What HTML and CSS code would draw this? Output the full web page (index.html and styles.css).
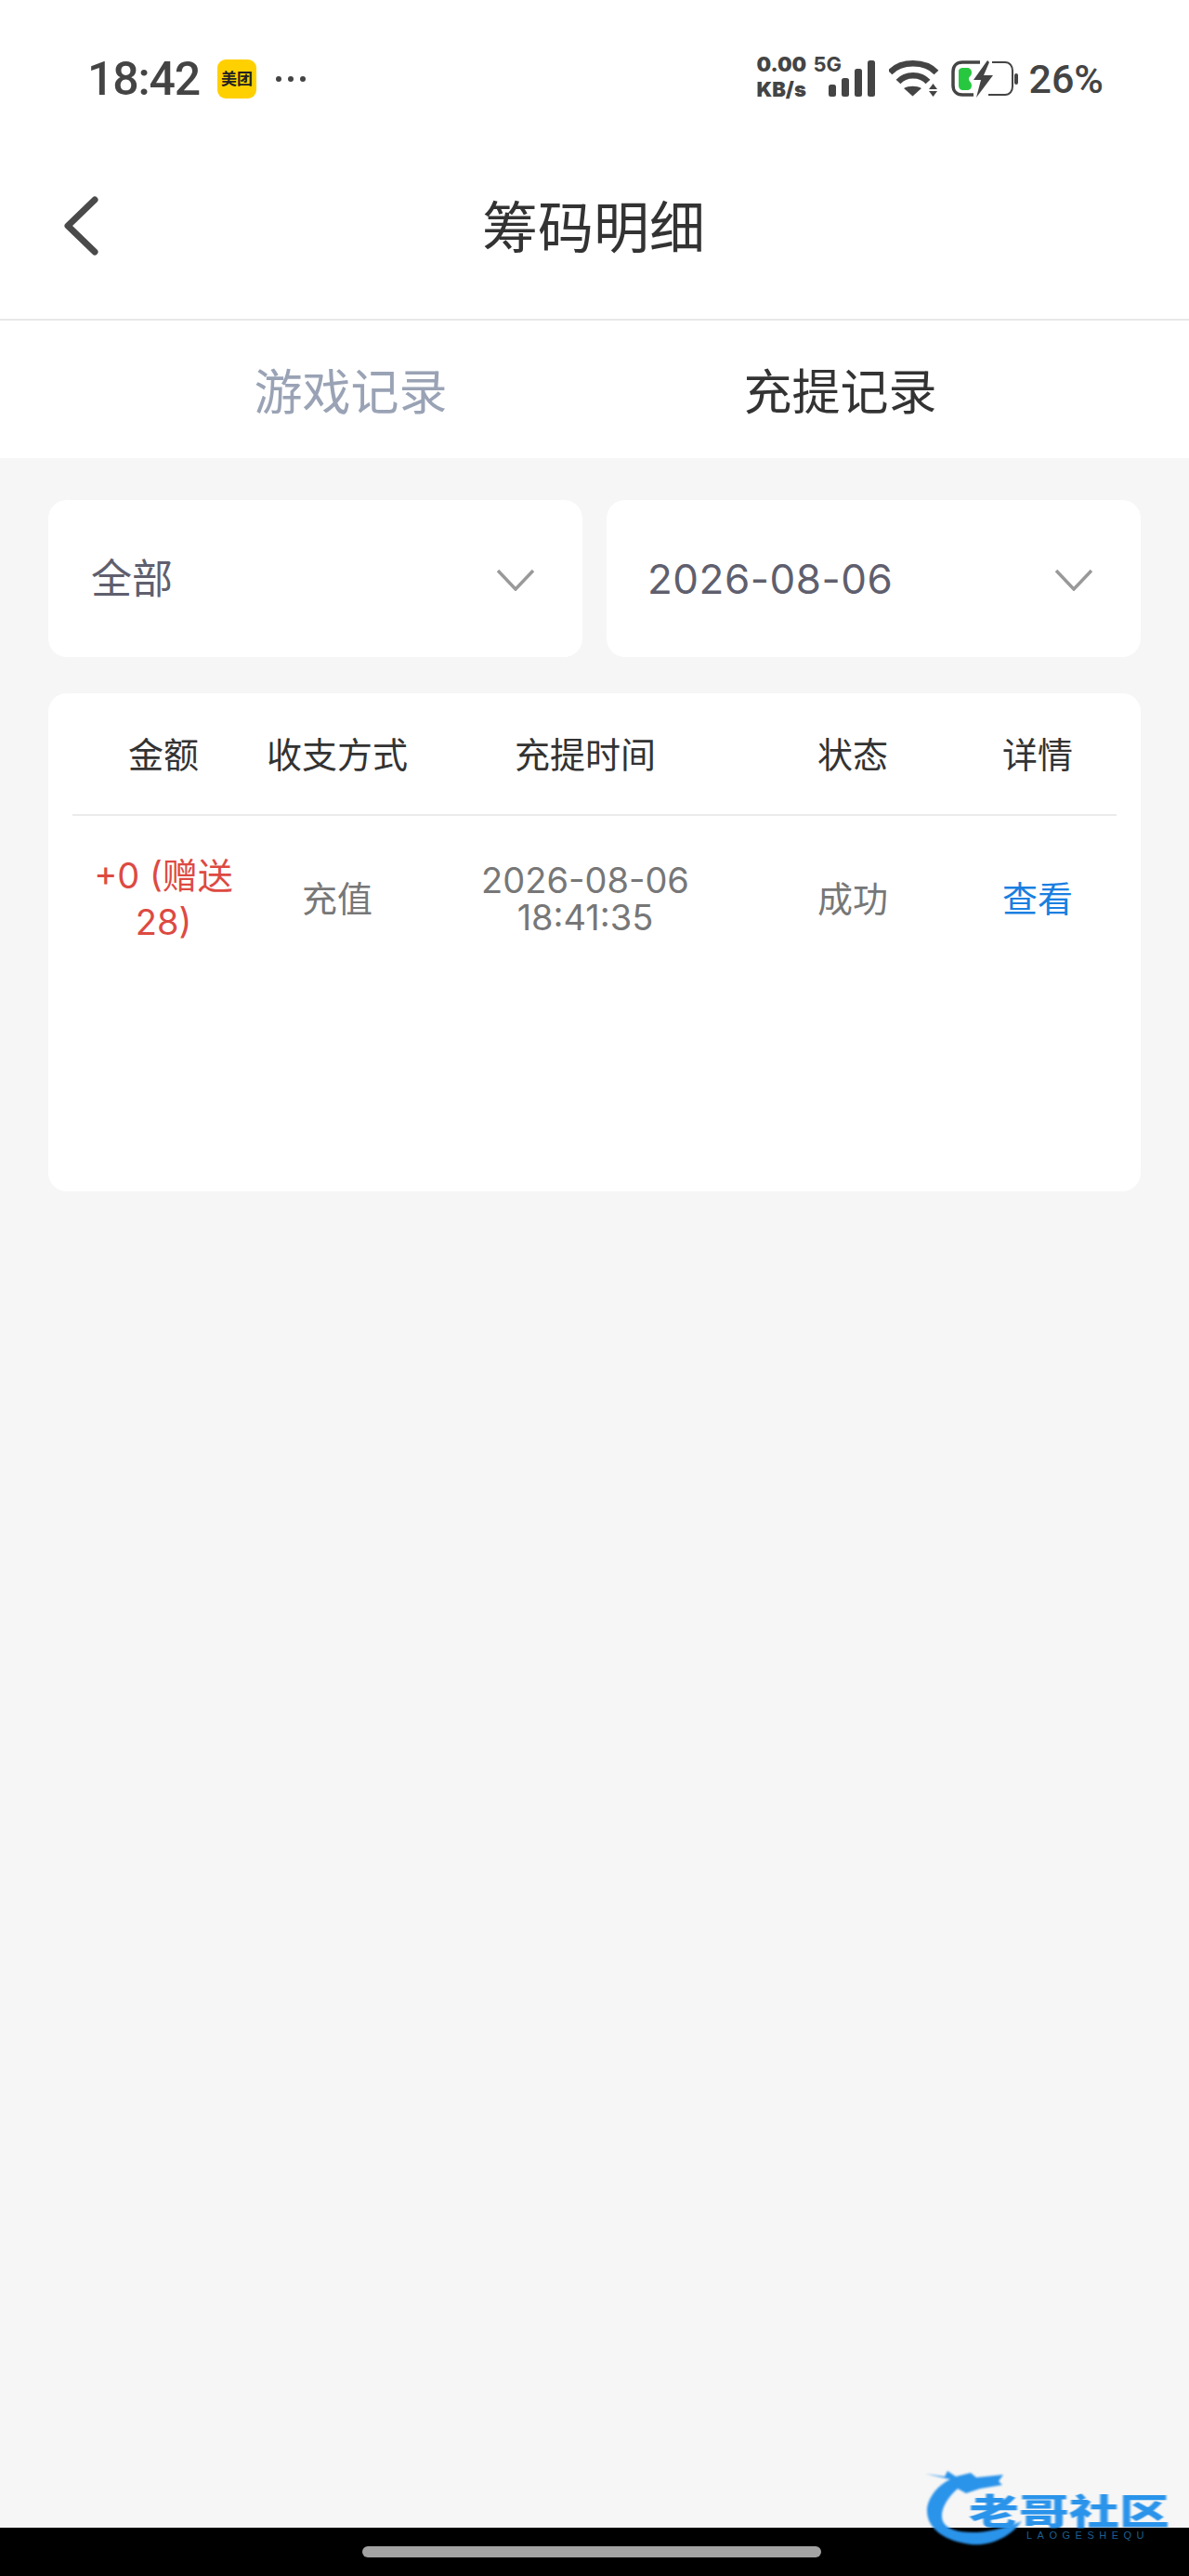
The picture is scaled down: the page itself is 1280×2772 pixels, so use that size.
FILE: index.html
```html
<!DOCTYPE html>
<html lang="zh-CN">
  <head>
    <meta charset="UTF-8" />
    <meta name="viewport" content="width=device-width, initial-scale=1.0" />
    <title>筹码明细</title>
    <link rel="stylesheet" href="styles.css">
  </head>
  <body>
    <div class="page">
      <!-- phone status bar -->
      <div class="status-bar">
        <div class="status-left">
          <span class="clock">18:42</span>
          <span class="app-badge">
            <svg width="42" height="42" viewBox="0 0 42 42">
              <rect x="0" y="0" width="42" height="42" rx="9" fill="#ffd000" />
              <text x="4" y="27" class="badge-text">美团</text>
            </svg>
          </span>
          <span class="dots"><i></i><i></i><i></i></span>
        </div>
        <div class="status-right">
          <div class="net">
            <span class="net-speed"><b>0.00</b><b>KB/s</b></span>
            <span class="net-type">5G</span>
          </div>
          <svg class="signal" width="50" height="42" viewBox="0 0 50 42">
            <rect x="0" y="27" width="8" height="13" rx="2.500" />
            <rect x="14" y="20" width="8" height="20" rx="2.500" />
            <rect x="28" y="10" width="8" height="30" rx="2.500" />
            <rect x="42" y="1" width="8" height="39" rx="2.500" />
          </svg>
          <svg class="wifi" width="54" height="40" viewBox="0 0 54 40">
            <path d="M1 13C13 0 39 0 51 13" fill="none" stroke="#444" stroke-width="6.500" />
            <path d="M10 23C18 14 34 14 42 23" fill="none" stroke="#444" stroke-width="6.500" />
            <path d="M16 30C21 27 30 27 35 30L25.500 38.500Z" fill="#444" />
            <path d="M43 31l4.500-6 4.500 6ZM43 33h9l-4.500 6Z" fill="#444" />
          </svg>
          <svg class="battery" width="74" height="42" viewBox="0 0 74 42">
            <path d="M31 3H12C6 3 2 7 2 13V28C2 34 6 38 12 38H24" fill="none" stroke="#444" stroke-width="3.500" />
            <path d="M40 38H58C63 38 66 34 66 29V12C66 7 63 3 58 3H44" fill="none" stroke="#444" stroke-width="2" />
            <rect x="68" y="15" width="4" height="12" rx="2" fill="#444" />
            <path d="M8 13C8 10 10 9 13 9H17C20 9 22 11 22 14C22 18 19 18 19 21C19 24 22 24 22 28C22 31 20 33 17 33H13C10 33 8 31 8 28Z" fill="#27c840" />
            <path d="M39 1L24 22H32L27 41L45 17H35L41 3Z" fill="#444" />
          </svg>
          <span class="battery-pct">26%</span>
        </div>
      </div>

      <header class="title-bar">
        <svg class="back" width="40" height="66" viewBox="0 0 40 66">
          <path d="M36 5L7 33L36 61" fill="none" stroke="#4a4a4a" stroke-width="7" stroke-linecap="round" stroke-linejoin="round" />
        </svg>
        <h1>筹码明细</h1>
      </header>

      <nav class="tabs">
        <a class="tab">游戏记录</a>
        <a class="tab active">充提记录</a>
      </nav>

      <main class="content">
        <div class="filters">
          <div class="select">
            <span class="cjk">全部</span>
            <svg width="40" height="24" viewBox="0 0 40 24"><path d="M1 2L20 22L39 2" fill="none" stroke="#999" stroke-width="3.500" /></svg>
          </div>
          <div class="select">
            <span class="date">2026-08-06</span>
            <svg width="40" height="24" viewBox="0 0 40 24"><path d="M1 2L20 22L39 2" fill="none" stroke="#999" stroke-width="3.500" /></svg>
          </div>
        </div>

        <section class="records">
          <div class="row head">
            <div>金额</div>
            <div>收支方式</div>
            <div>充提时间</div>
            <div>状态</div>
            <div>详情</div>
          </div>
          <div class="row body">
            <div class="amount">+0 (赠送28)</div>
            <div class="cjk">充值</div>
            <div class="time">2026-08-06 18:41:35</div>
            <div class="cjk">成功</div>
            <div class="cjk"><a class="link">查看</a></div>
          </div>
        </section>
      </main>

      <div class="nav-bar"><span class="home-pill"></span></div>

      <!-- watermark sits over the bottom edge -->
      <div class="watermark">
        <svg width="110" height="86" viewBox="0 0 110 86">
          <path d="M1 4L22 7L25 1L34 7L50 3L56 8L85 5L80 12L84 16L60 20L45 25L36 20C24 30 16 45 20 55C25 68 60 74 105 55C90 76 65 82 50 80C20 76 3 62 3 44C3 30 15 16 28 10Z" fill="#2a93ea" />
        </svg>
        <span class="wm-name">老哥社区</span>
        <span class="wm-sub">LAOGESHEQU</span>
      </div>
    </div>
  </body>
</html>
```

FILE: styles.css
```css
body {
  margin: 0;
  padding: 0;
  font-family: Inter, "Noto Sans CJK SC", sans-serif;
}

.page {
  position: relative;
  width: 1280px;
  height: 2772px;
  display: flex;
  flex-direction: column;
  background-color: #f6f6f6;
  overflow: hidden;
}

/* status bar */
.status-bar {
  height: 170px;
  box-sizing: border-box;
  padding: 0 92px 0 94px;
  display: flex;
  justify-content: space-between;
  align-items: center;
  background-color: #fff;
  color: #444;
}

.status-left,
.status-right {
  display: flex;
  align-items: center;
}

.clock {
  font-family: Roboto, sans-serif;
  font-size: 50px;
  font-weight: 500;
  letter-spacing: -1.200px;
  width: 140px;
}

.app-badge {
  display: flex;
}

.badge-text {
  font-size: 17px;
  font-weight: 700;
  fill: #222;
}

.dots {
  margin-left: 21px;
  display: flex;
  gap: 7px;
}

.dots i {
  width: 6px;
  height: 6px;
  border-radius: 50%;
  background-color: #444;
}

.net {
  display: flex;
  align-items: flex-start;
  font-size: 22px;
  line-height: 27px;
  font-weight: 700;
  margin-bottom: 5px;
}

.net-speed {
  width: 61px;
  display: flex;
  flex-direction: column;
  align-items: flex-start;
}

.net-type {
  width: 31px;
}

.signal {
  fill: #444;
  margin-left: -14px;
}

.wifi {
  margin-left: 15px;
}

.battery {
  margin-left: 13px;
}

.battery-pct {
  font-family: Roboto, sans-serif;
  font-size: 43px;
  font-weight: 500;
  margin-left: 9px;
}

/* title */
.title-bar {
  height: 175px;
  box-sizing: border-box;
  display: flex;
  align-items: center;
  justify-content: center;
  position: relative;
  background-color: #fff;
  border-bottom: 2px solid #e8e8e8;
  padding: 0 2px 33px 0;
}

.title-bar h1 {
  margin: 0;
  font-size: 60px;
  font-weight: 400;
  color: #333;
}

.back {
  position: absolute;
  left: 66px;
  top: 40px;
}

.tabs {
  height: 148px;
  box-sizing: border-box;
  display: grid;
  grid-template-columns: 1fr 1fr;
  padding: 0 112px 2px 114px;
  align-items: center;
  justify-items: center;
  background-color: #fff;
  font-size: 52px;
  color: #9aa3b5;
}

.tab.active {
  color: #333;
}

/* filters and table */
.content {
  flex: 1;
  padding: 45px 52px 0;
}

.filters {
  display: flex;
  gap: 26px;
}

.select {
  flex: 1;
  height: 169px;
  box-sizing: border-box;
  padding: 0 52px 0 46px;
  display: flex;
  justify-content: space-between;
  align-items: center;
  background-color: #fff;
  border-radius: 20px;
  font-size: 44px;
  color: #5f5f6e;
}

.select svg {
  margin-top: 2px;
}

.date {
  letter-spacing: 0.500px;
  margin-left: -2px;
}

/* the CJK glyphs sit a little lower than the digits in this stack */
.cjk {
  padding-bottom: 6px;
}

.records {
  margin-top: 39px;
  height: 536px;
  box-sizing: border-box;
  padding: 0 26px;
  background-color: #fff;
  border-radius: 20px;
}

.row {
  display: grid;
  grid-template-columns: 196px 178px 356px 220px 178px;
  align-items: center;
  text-align: center;
  font-size: 38px;
}

.row.head {
  height: 132px;
  box-sizing: border-box;
  padding-bottom: 4px;
  border-bottom: 2px solid #ebebeb;
  color: #333;
}

.row.body {
  height: 178px;
  color: #777;
}

.amount {
  color: #dd4a42;
  line-height: 50px;
  padding: 0 10px;
}

.time {
  line-height: 40px;
  padding: 0 60px;
}

.link {
  color: #1a7fe0;
}

/* bottom bar */
.nav-bar {
  height: 52px;
  box-sizing: border-box;
  padding-right: 6px;
  display: flex;
  justify-content: center;
  align-items: flex-start;
  background-color: #000;
}

.home-pill {
  margin-top: 20px;
  width: 494px;
  height: 12px;
  border-radius: 6px;
  background-color: #a3a3a3;
}

.watermark {
  position: absolute;
  left: 995px;
  top: 2658px;
  width: 285px;
  height: 86px;
  color: #2a93ea;
}

.watermark svg {
  position: absolute;
  left: 0;
  top: 0;
  filter: blur(0.8px);
}

.wm-name {
  position: absolute;
  left: 48px;
  top: 25px;
  font-size: 38px;
  line-height: 38px;
  font-weight: 900;
  white-space: nowrap;
  transform: scaleX(1.42);
  transform-origin: left center;
  filter: blur(0.6px);
}

.wm-sub {
  position: absolute;
  left: 110px;
  top: 65px;
  font-family: "Liberation Sans", sans-serif;
  font-size: 11px;
  line-height: 11px;
  letter-spacing: 5.500px;
  color: #1d5f90;
  white-space: nowrap;
}
```
